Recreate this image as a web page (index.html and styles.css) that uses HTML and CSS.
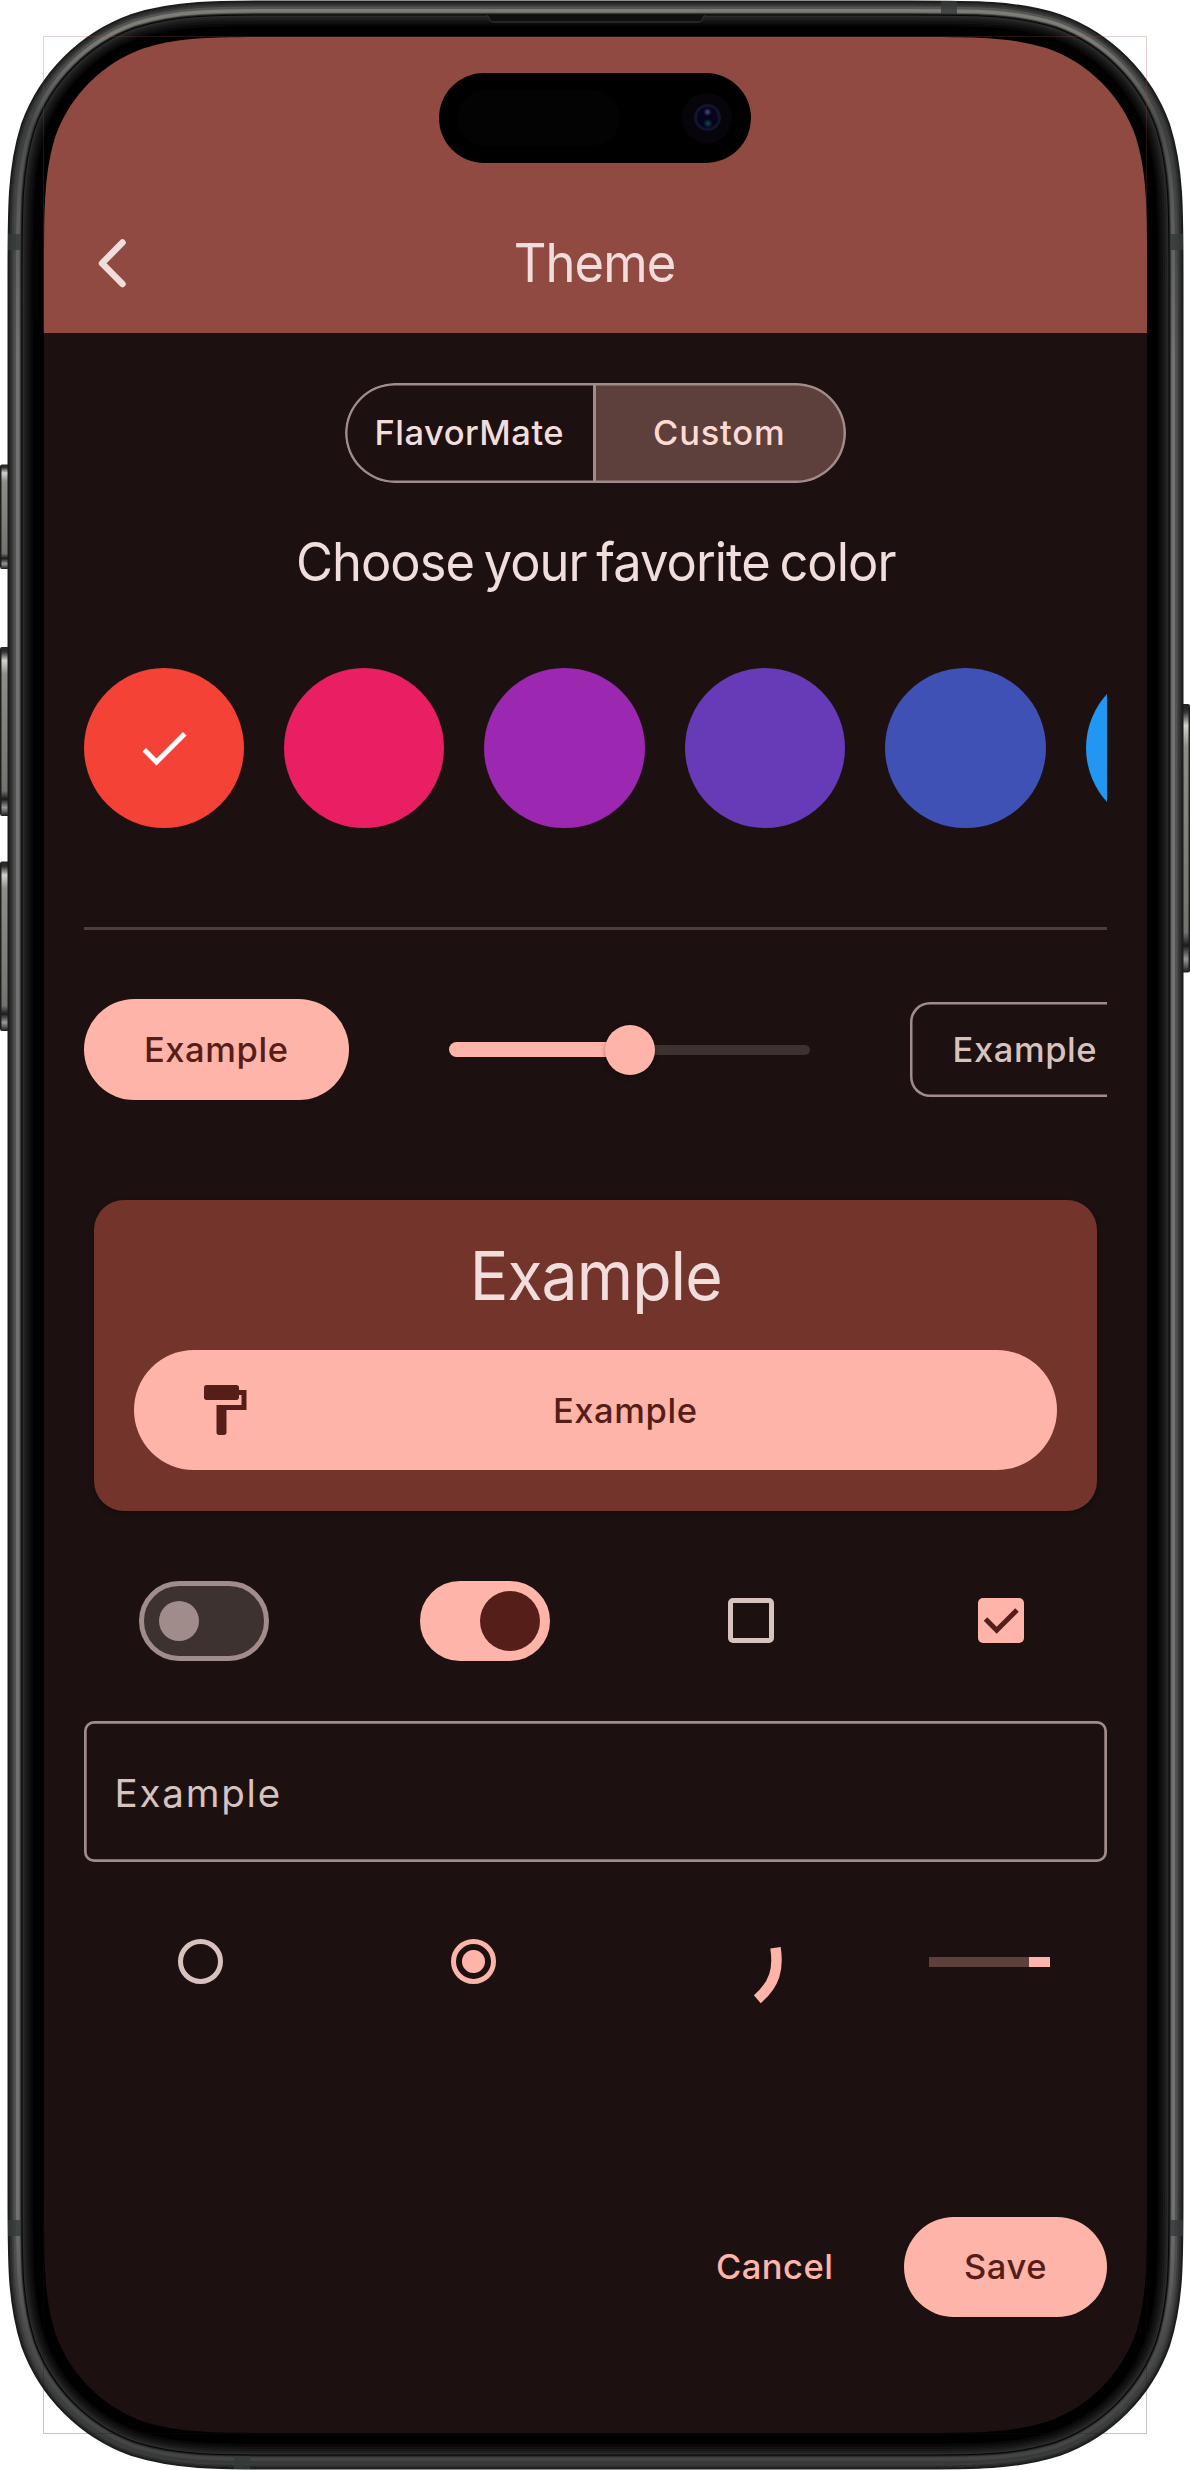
FILE: index.html
```html
<!DOCTYPE html>
<html lang="en">
<head>
<meta charset="utf-8">
<title>Theme</title>
<link rel="stylesheet" href="styles.css">
</head>
<body>
<div class="device">
  <svg class="frame" width="1190" height="2470" viewBox="0 0 1190 2470" fill="none" aria-hidden="true">
    <defs>
      <linearGradient id="metal" gradientUnits="userSpaceOnUse" x1="0" y1="0" x2="0" y2="2470">
        <stop offset="0" stop-color="#7d7c77"/><stop offset=".01" stop-color="#6e6e6a"/>
        <stop offset=".035" stop-color="#4b4d4c"/><stop offset=".08" stop-color="#5e5f5f"/>
        <stop offset=".13" stop-color="#727272"/><stop offset=".88" stop-color="#727272"/>
        <stop offset=".93" stop-color="#4c4c4c"/><stop offset="1" stop-color="#404141"/>
      </linearGradient>
      <linearGradient id="metalMid" gradientUnits="userSpaceOnUse" x1="0" y1="0" x2="0" y2="2470">
        <stop offset="0" stop-color="#555653"/><stop offset=".035" stop-color="#3d3f3e"/>
        <stop offset=".13" stop-color="#525252"/><stop offset=".88" stop-color="#525252"/>
        <stop offset="1" stop-color="#333434"/>
      </linearGradient>
      <linearGradient id="key" x1="0" y1="0" x2="0" y2="1">
        <stop offset="0" stop-color="#222"/><stop offset=".03" stop-color="#333"/>
        <stop offset=".08" stop-color="#d4d2cc"/><stop offset=".16" stop-color="#8d8c88"/>
        <stop offset=".85" stop-color="#73726f"/><stop offset=".9" stop-color="#1b1b1b"/>
        <stop offset=".95" stop-color="#999"/><stop offset="1" stop-color="#1b1b1b"/>
      </linearGradient>
      <path id="edge" transform="translate(44 37)" d="M238.5 0H864.5C933.2 0 967.5 0 1004.5 11.7C1044.8 26.4 1076.6 58.2 1091.3 98.5C1103 135.5 1103 169.8 1103 238.5V2157.5C1103 2226.2 1103 2260.5 1091.3 2297.5C1076.6 2337.8 1044.8 2369.6 1004.5 2384.3C967.5 2396 933.2 2396 864.5 2396H238.5C169.8 2396 135.5 2396 98.5 2384.3C58.2 2369.6 26.4 2337.8 11.7 2297.5C0 2260.5 0 2226.2 0 2157.5V238.5C0 169.8 0 135.5 11.7 98.5C26.4 58.2 58.2 26.4 98.5 11.7C135.5 0 169.8 0 238.5 0Z"/>
    </defs>
    <g fill="url(#key)">
      <rect x="0" y="464.500" width="10" height="104.500" rx="2"/>
      <rect x="0" y="647" width="10" height="169" rx="2"/>
      <rect x="0" y="861.500" width="10" height="169.500" rx="2"/>
      <rect x="1180" y="704" width="10" height="268.500" rx="2"/>
    </g>
    <g fill="#1d1e1e">
      <rect x="0" y="466" width="1.500" height="101"/>
      <rect x="0" y="649" width="1.500" height="165"/>
      <rect x="0" y="863" width="1.500" height="166"/>
      <rect x="1188.500" y="706" width="1.500" height="265"/>
    </g>
    <use href="#edge" stroke="#1b1d1c" stroke-width="73"/>
    <use href="#edge" stroke="#2b2d2c" stroke-width="69"/>
    <use href="#edge" stroke="#3a3c3b" stroke-width="65"/>
    <use href="#edge" stroke="url(#metalMid)" stroke-width="61"/>
    <use href="#edge" stroke="url(#metal)" stroke-width="56"/>
    <use href="#edge" stroke="url(#metalMid)" stroke-width="49"/>
    <use href="#edge" stroke="#222322" stroke-width="47"/>
    <use href="#edge" stroke="#060606" stroke-width="45"/>
    <use href="#edge" stroke="#2b2b2b" stroke-width="43"/>
    <use href="#edge" stroke="#212121" stroke-width="40"/>
    <use href="#edge" stroke="#191919" stroke-width="36"/>
    <use href="#edge" stroke="#111" stroke-width="32"/>
    <use href="#edge" stroke="#090909" stroke-width="27"/>
    <use href="#edge" stroke="#000" stroke-width="22"/>
    <g fill="#35393b" fill-opacity=".8">
      <rect x="8" y="234" width="13" height="16"/>
      <rect x="1170" y="234" width="13" height="16"/>
      <rect x="8" y="2220" width="13" height="16"/>
      <rect x="1170" y="2220" width="13" height="16"/>
      <rect x="941" y="1" width="16" height="13"/>
      <rect x="234" y="2456" width="16" height="13"/>
    </g>
    <path d="M487.500 15c2 3 2 7 6 7h205c4 0 4-4 6-7" fill="#101010" stroke="#3a3a3a"/>
    <path d="M43.500 332V36.500H1146.500V332" stroke="#904a42" stroke-opacity=".25"/>
    <path d="M43.500 2200V2433.500H1146.500V2200" stroke="#1c1110" stroke-opacity=".25"/>
  </svg>

  <div class="screen">
    <header class="appbar">
      <svg class="back" width="60" height="60" viewBox="0 0 60 60" fill="none"><path d="M38.500 9.500L18 30.300L38.500 51" stroke="#f1dedc" stroke-width="6.500" stroke-linecap="round" stroke-linejoin="round"/></svg>
      <h1 class="appbar-title">Theme</h1>
    </header>

    <main class="content">
      <div class="segmented">
        <div class="segment flavor">FlavorMate</div>
        <div class="segment custom">Custom</div>
      </div>

      <h2 class="prompt">Choose your favorite color</h2>

      <div class="swatches">
        <div class="swatch red"><svg width="60" height="60" viewBox="0 0 24 24" fill="#fff"><path d="M9 16.170L4.830 12l-1.420 1.410L9 19 21 7l-1.410-1.410z"/></svg></div>
        <div class="swatch pink"></div>
        <div class="swatch purple"></div>
        <div class="swatch violet"></div>
        <div class="swatch indigo"></div>
        <div class="swatch blue"></div>
      </div>

      <div class="divider"></div>

      <div class="samples">
        <div class="button filled">Example</div>
        <div class="slider"><div class="slider-active"></div><div class="slider-thumb"></div><div class="slider-rest"></div></div>
        <div class="chip">Example</div>
      </div>

      <section class="card">
        <h3 class="card-title">Example</h3>
        <div class="wide-button">
          <svg class="paint" width="60" height="60" viewBox="0 0 24 24" fill="#561e19"><path d="M18 4V3c0-.55-.45-1-1-1H5c-.55 0-1 .45-1 1v4c0 .55.45 1 1 1h12c.55 0 1-.45 1-1V6h1v4H9v11c0 .55.45 1 1 1h2c.55 0 1-.45 1-1v-9h8V4h-3z"/></svg>
          <span class="wide-label">Example</span>
        </div>
      </section>

      <div class="toggles">
        <div class="switch"><div class="knob"></div></div>
        <div class="switch on"><div class="knob"></div></div>
        <div class="checkbox"></div>
        <div class="checkbox checked"><svg width="46" height="46" viewBox="0 0 46 46" fill="none"><path d="M7.500 21L18.700 32.200L39 12" stroke="#561e19" stroke-width="5"/></svg></div>
      </div>

      <div class="field">Example</div>

      <div class="indicators">
        <div class="radio"></div>
        <div class="radio selected"></div>
        <svg class="spinner" width="90" height="90" viewBox="687 1917 90 90" fill="none"><path d="M775.500 1947.800C778.700 1969 775 1984 757.300 1999.200" stroke="#ffb4aa" stroke-width="10.500"/></svg>
        <div class="progress"><div class="progress-value"></div></div>
      </div>

      <div class="actions">
        <div class="text-button">Cancel</div>
        <div class="button save">Save</div>
      </div>
    </main>

    <div class="island"><div class="sensor"></div><div class="camera"><div class="lens"></div></div></div>
  </div>
</div>
</body>
</html>
```
FILE: styles.css
```css
* { box-sizing: border-box; }
body { margin: 0; background: #fff; font-family: Inter, "Liberation Sans", sans-serif; }
h1, h2, h3 { margin: 0; font-weight: 400; }
svg { display: block; flex: none; }

.device { position: relative; width: 1190px; height: 2470px; padding: 37px 43px 37px 44px; overflow: hidden; }
.frame { position: absolute; left: 0; top: 0; }
.screen {
  position: relative; width: 1103px; height: 2396px; background: #1c1110; color: #f1dedc;
  clip-path: path("M238.500 0H864.500C933.200 0 967.500 0 1004.500 11.700C1044.800 26.400 1076.600 58.200 1091.300 98.500C1103 135.500 1103 169.800 1103 238.500V2157.500C1103 2226.200 1103 2260.500 1091.300 2297.500C1076.600 2337.800 1044.800 2369.600 1004.500 2384.300C967.500 2396 933.200 2396 864.500 2396H238.500C169.800 2396 135.500 2396 98.500 2384.300C58.200 2369.600 26.400 2337.800 11.700 2297.500C0 2260.500 0 2226.200 0 2157.500V238.500C0 169.800 0 135.500 11.700 98.500C26.400 58.200 58.200 26.400 98.500 11.700C135.500 0 169.800 0 238.500 0Z");
}

.appbar { display: grid; grid-template-columns: 60px 1fr 60px; align-items: center; height: 295.500px; padding: 156px 42px 0 40px; background: #904a42; }
.appbar-title { text-align: center; font-size: 53px; line-height: 60px; letter-spacing: -1px; transform: scaleX(.957); }

.island { position: absolute; left: 395px; top: 35.500px; display: flex; align-items: center; justify-content: space-between; width: 312px; height: 90.500px; padding: 0 19px 0 18px; border-radius: 46px; background: #000; }
.sensor { width: 163px; height: 56px; border-radius: 28px; background: #030303; }
.camera { display: flex; align-items: center; justify-content: center; width: 50px; height: 50px; border-radius: 50%; background: #08050a; }
.lens { width: 27px; height: 27px; border: 3px solid #12142b; border-radius: 50%; background: radial-gradient(circle at 50% 24%, #4a4a86 0, transparent 22%), radial-gradient(circle at 52% 78%, #0d4a52 0, transparent 24%), #04041c; }

.content { padding: 50px 40px 0 39.500px; }

.segmented { position: relative; display: flex; width: 501px; height: 100.500px; margin: 0 auto; border-radius: 51px; overflow: hidden; }
.segmented::after { content: ""; position: absolute; inset: 0; border-radius: 51px; box-shadow: inset 0 0 0 2.500px #a08c8a; }
.segment { flex: 1; display: flex; align-items: center; justify-content: center; font-size: 34.500px; font-weight: 450; letter-spacing: .5px; }
.flavor { padding-left: 1px; }
.custom { padding-right: 3px; border-left: 3px solid #a08c8a; background: #5d3f3b; color: #ffdad5; letter-spacing: .8px; }

.prompt { margin: 48.500px 0 76.500px; text-align: center; font-size: 53px; line-height: 60px; letter-spacing: -1px; word-spacing: -3.800px; transform: scaleX(.955); }

.swatches { display: flex; gap: 40.100px; overflow: hidden; }
.swatch { flex: none; display: flex; align-items: center; justify-content: center; width: 160.400px; height: 160.400px; border-radius: 50%; }
.red { background: #f44336; }
.pink { background: #e91e63; }
.purple { background: #9c27b0; }
.violet { background: #673ab7; }
.indigo { background: #3f51b5; }
.blue { background: #2196f3; }

.divider { height: 3px; margin: 99px 0 69px; background: #4e3d3b; }

.samples { display: flex; align-items: center; height: 100.500px; overflow: hidden; }
.button { flex: none; display: flex; align-items: center; justify-content: center; height: 100.500px; border-radius: 51px; background: #ffb4aa; color: #561e19; font-size: 34.500px; font-weight: 450; letter-spacing: .6px; }
.filled { width: 265.500px; }
.slider { flex: none; display: flex; align-items: center; width: 361px; margin: 0 100px 0 99.500px; }
.slider-active { width: 181px; height: 15px; border-radius: 7.500px 0 0 7.500px; background: #ffb4aa; }
.slider-thumb { width: 50px; height: 50px; margin: 0 -25px; border-radius: 50%; background: #ffb4aa; box-shadow: 0 2px 5px rgba(0, 0, 0, .35); z-index: 1; }
.slider-rest { width: 180px; height: 10px; border-radius: 0 5px 5px 0; background: #3d3230; }
.chip { flex: none; display: flex; align-items: center; width: 230px; height: 95px; padding-left: 43px; border-radius: 20px; box-shadow: inset 0 0 0 2.500px #a08c8a; color: #d8c2be; font-size: 34.500px; font-weight: 450; letter-spacing: .6px; }

.card { height: 310.700px; margin: 100px 10px 70px; padding: 35px 40px 40px; border-radius: 30px; background: #73342c; box-shadow: 0 2px 5px rgba(0, 0, 0, .35); }
.card-title { text-align: center; font-size: 67.500px; line-height: 81px; letter-spacing: -1px; transform: scaleX(.953); }
.wide-button { display: grid; grid-template-columns: 60px 1fr; align-items: center; height: 120.500px; margin-top: 34px; padding: 0 60px; border-radius: 60px; background: #ffb4aa; color: #561e19; }
.wide-label { text-align: center; font-size: 34.500px; font-weight: 450; letter-spacing: .6px; }

.toggles { display: flex; align-items: center; height: 80px; padding-left: 55.500px; }
.switch { display: flex; align-items: center; width: 130px; height: 80px; padding-left: 15px; border: 5px solid #a08c8a; border-radius: 40px; background: #3d3230; }
.knob { width: 40px; height: 40px; border-radius: 50%; background: #a08c8a; }
.switch.on { margin-left: 150.500px; padding-left: 55px; border-color: #ffb4aa; background: #ffb4aa; }
.on .knob { width: 60px; height: 60px; background: #561e19; }
.checkbox { width: 45.500px; height: 45.500px; margin-left: 178.500px; border: 5px solid #d8c2be; border-radius: 5px; }
.checkbox.checked { margin-left: 204.500px; border: 0; background: #ffb4aa; }

.field { display: flex; align-items: center; height: 141px; margin: 60px 0 50px; padding: 3px 0 0 31px; border-radius: 10px; box-shadow: inset 0 0 0 2.700px #a08c8a; color: #d8c2be; font-size: 38.500px; letter-spacing: 1.800px; }

.indicators { display: flex; align-items: center; height: 100px; padding-left: 94px; }
.radio { width: 45px; height: 45px; border: 5px solid #d8c2be; border-radius: 50%; }
.radio.selected { margin-left: 228.500px; border-color: #ffb4aa; background: radial-gradient(circle, #ffb4aa 11px, transparent 12px); }
.spinner { margin-left: 191px; overflow: visible; }
.progress { display: flex; justify-content: flex-end; width: 121px; height: 10px; margin-left: 152px; background: #5d3f3b; }
.progress-value { width: 21px; background: #ffb4aa; }

.actions { display: flex; align-items: center; justify-content: flex-end; margin-top: 205px; }
.text-button { margin-right: 70.500px; color: #ffb4aa; font-size: 34.500px; font-weight: 450; letter-spacing: .5px; }
.save { width: 203px; }
```
